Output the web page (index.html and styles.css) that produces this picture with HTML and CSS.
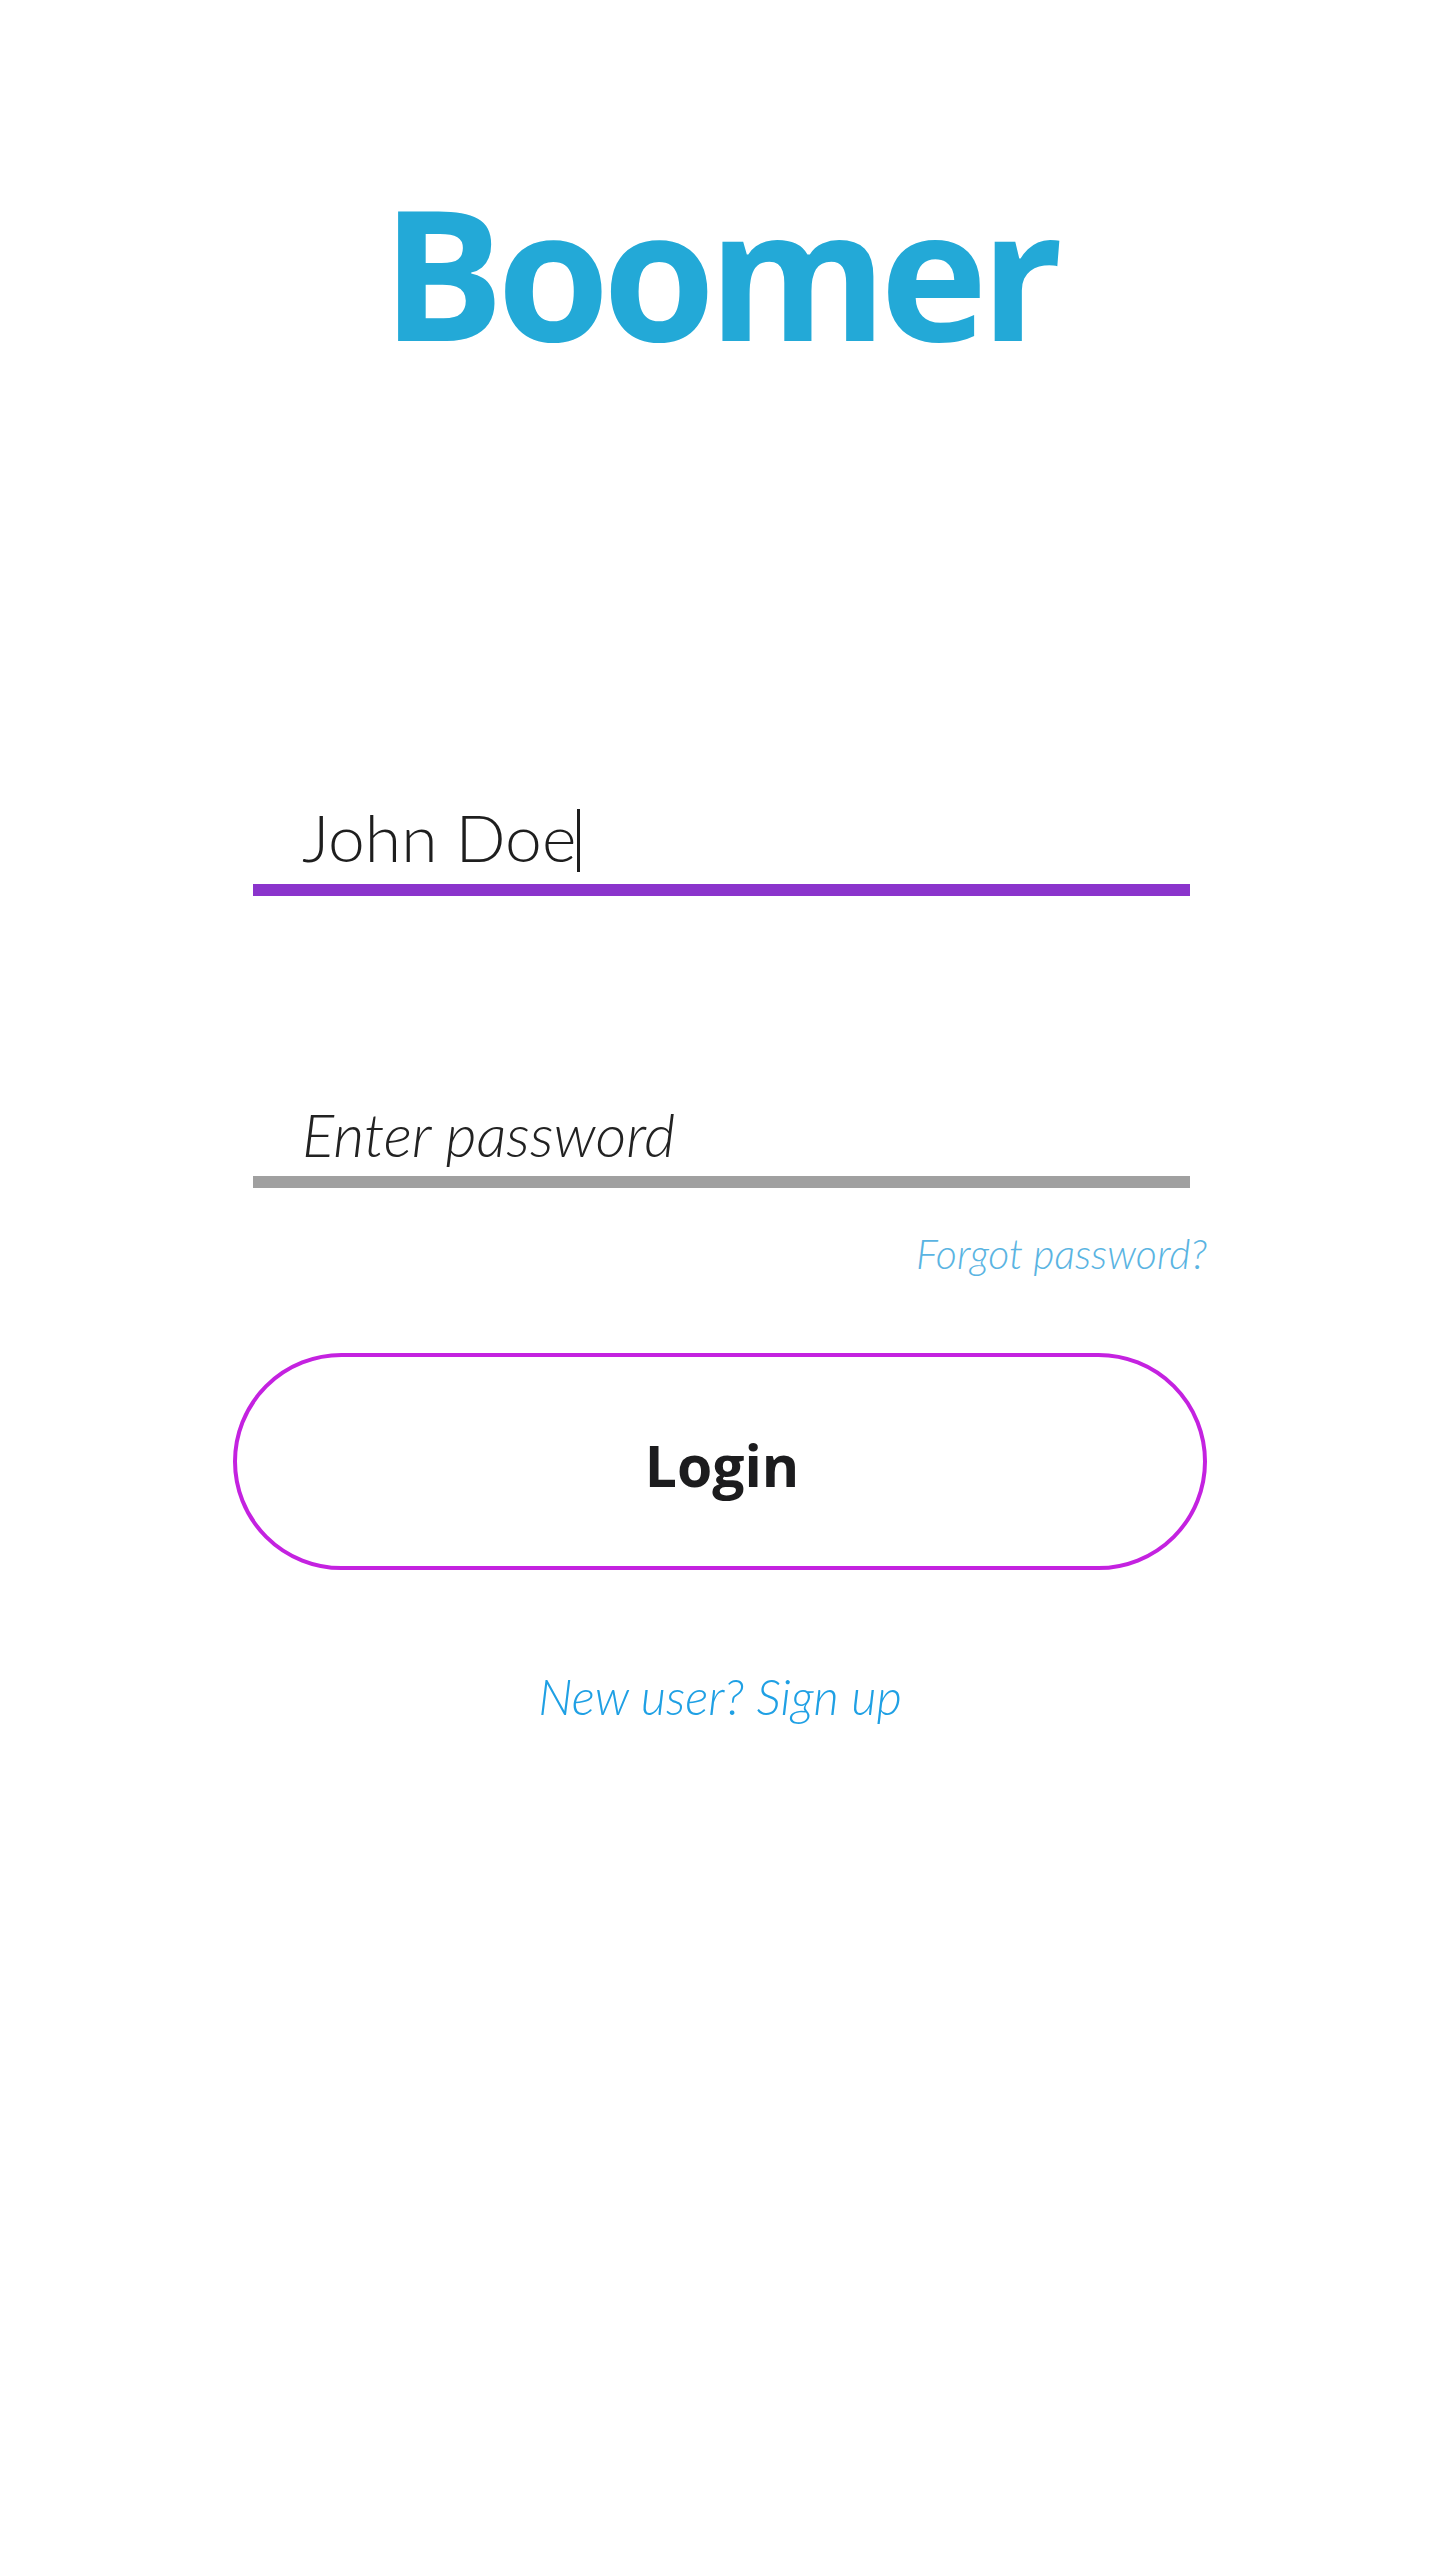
FILE: index.html
```html
<!DOCTYPE html>
<html lang="en">
<head>
<meta charset="utf-8">
<title>Boomer - Login</title>
<link rel="stylesheet" href="styles.css">
</head>
<body>
<main class="page">
  <h1 class="brand">Boomer</h1>
  <form class="login-form">
    <div class="field field-active">
      <div class="field-text">John Doe<span class="caret"></span></div>
      <div class="field-line"></div>
    </div>
    <div class="field field-password">
      <div class="field-text placeholder">Enter password</div>
      <div class="field-line"></div>
    </div>
    <div class="forgot-row"><a class="forgot" href="#">Forgot password?</a></div>
    <button class="login-btn" type="button">Login</button>
    <div class="signup-row"><a class="signup" href="#">New user? Sign up</a></div>
  </form>
</main>
</body>
</html>
```
FILE: styles.css
```css
html, body {
  margin: 0;
  padding: 0;
  background: #ffffff;
}

.page {
  display: flex;
  flex-direction: column;
  align-items: center;
  min-height: 2560px;
  font-family: "Lato", "Open Sans", sans-serif;
}

.brand {
  margin: 179px 2px 0 0;
  font-family: "Open Sans", "Noto Sans", sans-serif;
  font-weight: 700;
  font-size: 182px;
  line-height: 182px;
  letter-spacing: -7px;
  color: #23a9d7;
}

.login-form {
  width: 974px;
  display: flex;
  flex-direction: column;
  margin-top: 436px;
}

.field {
  display: flex;
  flex-direction: column;
  margin: 0 17px 0 20px;
}

.field-text {
  padding-left: 49px;
  font-weight: 300;
  color: #1e1e1e;
}

.field-active .field-text {
  font-size: 66px;
  line-height: 80px;
}

.caret {
  display: inline-block;
  width: 3px;
  height: 63px;
  margin-left: 1px;
  background: #1e1e1e;
  vertical-align: -10px;
}

.field-line {
  height: 12px;
  background: #8b34cc;
  margin-top: 7px;
}

.field-password {
  margin-top: 202px;
}

.field-password .field-text {
  font-size: 60px;
  line-height: 72px;
  font-style: italic;
  color: #222222;
}

.field-password .field-line {
  background: #a0a0a0;
  margin-top: 6px;
}

.forgot-row {
  display: flex;
  justify-content: flex-end;
  margin-top: 42px;
}

.forgot {
  font-size: 41px;
  line-height: 48px;
  font-weight: 300;
  font-style: italic;
  color: #5ab4e2;
  text-decoration: none;
}

.login-btn {
  margin-top: 75px;
  height: 217px;
  width: 100%;
  border: 4px solid #c422e0;
  border-radius: 109px;
  background: #ffffff;
  font-family: "Open Sans", "Noto Sans", sans-serif;
  font-weight: 700;
  font-size: 57px;
  color: #1c1c1e;
  display: flex;
  align-items: center;
  justify-content: center;
  padding: 7px 0 0 4px;
}

.signup-row {
  display: flex;
  justify-content: center;
  margin-top: 98px;
}

.signup {
  font-size: 49px;
  line-height: 56px;
  font-weight: 300;
  font-style: italic;
  color: #1fa0e4;
  text-decoration: none;
}
```
